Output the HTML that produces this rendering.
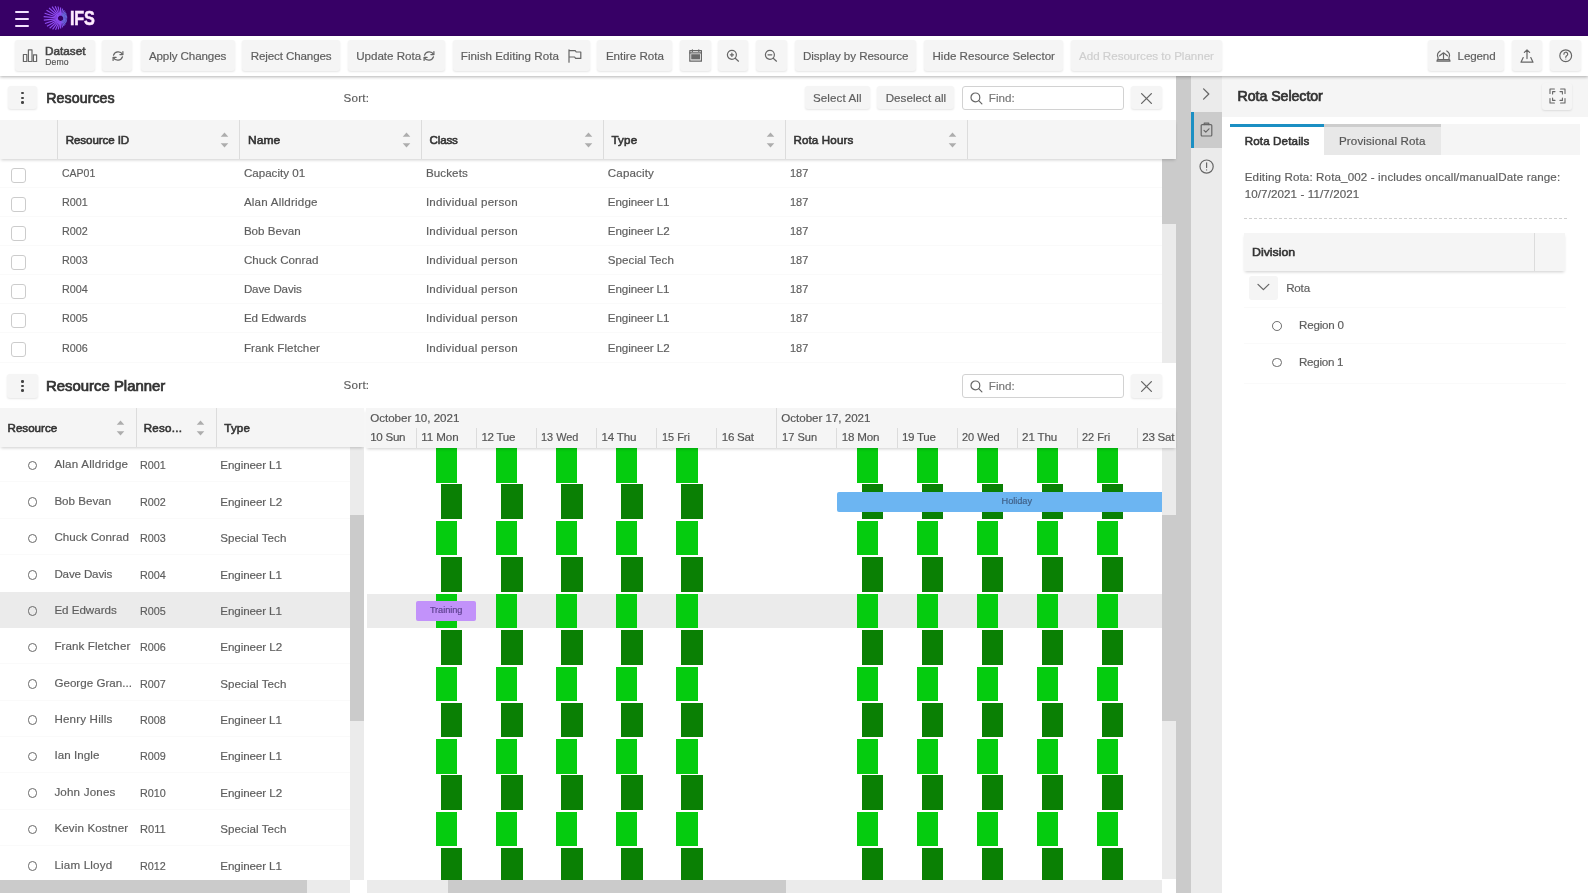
<!DOCTYPE html>
<html lang="en"><head><meta charset="utf-8"><title>IFS Resource Planner</title>
<style>
html,body{margin:0;padding:0;}
body{width:1588px;height:893px;overflow:hidden;background:#fff;position:relative;font-family:"Liberation Sans",sans-serif;}
#app{position:absolute;left:0;top:0;width:1588px;height:893px;overflow:hidden;will-change:transform;}
#app div,#app span.t,#app svg.i{position:absolute;}
span.t{white-space:nowrap;line-height:16px;height:16px;-webkit-text-stroke-width:.18px;}
span.b{-webkit-text-stroke-width:.05em;}
.btn{background:#f5f5f5;border-radius:3px;box-shadow:0 1px 2px rgba(0,0,0,.10);}
.hdr{background:#f5f5f5;box-shadow:0 2px 3px -1px rgba(0,0,0,.2);}
.sep{background:#fafafa;height:1px;}
svg.i{overflow:visible;fill:none;stroke:#666;stroke-width:1.2;stroke-linecap:round;stroke-linejoin:round;}
.lg{background:#05cc0f;}
.dg{background:#0a8004;}
</style></head><body><div id="app">

<div style="left:0.0px;top:0.0px;width:1588.0px;height:36.0px;background:#370066;"></div>
<div style="left:14.9px;top:11.3px;width:14.0px;height:2.0px;background:#f3e0ff;border-radius:1px;"></div>
<div style="left:14.9px;top:17.9px;width:14.0px;height:2.0px;background:#f3e0ff;border-radius:1px;"></div>
<div style="left:14.9px;top:24.5px;width:14.0px;height:2.0px;background:#f3e0ff;border-radius:1px;"></div>
<svg class="i" style="left:43.0px;top:5.0px;stroke-width:1.15;stroke-linecap:butt;" width="26" height="26" viewBox="0 0 26 26"><line x1="20.29" y1="13.57" x2="24.16" y2="13.96" stroke="#6a68dc"/><line x1="20.17" y1="14.12" x2="23.97" y2="15.34" stroke="#6a68dc"/><line x1="19.94" y1="14.64" x2="23.60" y2="16.72" stroke="#6a68dc"/><line x1="19.61" y1="15.10" x2="23.02" y2="18.14" stroke="#6a68dc"/><line x1="19.20" y1="15.48" x2="22.20" y2="19.57" stroke="#6a68dc"/><line x1="18.71" y1="15.76" x2="21.07" y2="21.00" stroke="#7a58e8"/><line x1="18.17" y1="15.94" x2="19.57" y2="22.37" stroke="#7a58e8"/><line x1="17.61" y1="16.00" x2="17.65" y2="23.57" stroke="#8f4cf2"/><line x1="17.05" y1="15.94" x2="15.29" y2="24.44" stroke="#8f4cf2"/><line x1="16.51" y1="15.77" x2="12.55" y2="24.80" stroke="#8f4cf2"/><line x1="16.02" y1="15.49" x2="9.57" y2="24.46" stroke="#8f4cf2"/><line x1="15.60" y1="15.12" x2="6.62" y2="23.28" stroke="#8f4cf2"/><line x1="15.27" y1="14.66" x2="3.97" y2="21.26" stroke="#8f4cf2"/><line x1="15.04" y1="14.15" x2="1.94" y2="18.47" stroke="#8f4cf2"/><line x1="14.92" y1="13.59" x2="0.80" y2="15.15" stroke="#8f4cf2"/><line x1="14.91" y1="13.03" x2="0.68" y2="11.60" stroke="#8f4cf2"/><line x1="15.03" y1="12.48" x2="1.62" y2="8.19" stroke="#8f4cf2"/><line x1="15.26" y1="11.96" x2="3.50" y2="5.25" stroke="#8f4cf2"/><line x1="15.59" y1="11.50" x2="6.09" y2="3.03" stroke="#8f4cf2"/><line x1="16.00" y1="11.12" x2="9.07" y2="1.68" stroke="#8f4cf2"/><line x1="16.49" y1="10.84" x2="12.15" y2="1.20" stroke="#8f4cf2"/><line x1="17.03" y1="10.66" x2="15.03" y2="1.50" stroke="#8f4cf2"/><line x1="17.59" y1="10.60" x2="17.55" y2="2.38" stroke="#8f4cf2"/><line x1="18.15" y1="10.66" x2="19.60" y2="3.65" stroke="#7a58e8"/><line x1="18.69" y1="10.83" x2="21.19" y2="5.13" stroke="#7a58e8"/><line x1="19.18" y1="11.11" x2="22.36" y2="6.68" stroke="#6a68dc"/><line x1="19.60" y1="11.48" x2="23.19" y2="8.22" stroke="#6a68dc"/><line x1="19.93" y1="11.94" x2="23.73" y2="9.72" stroke="#6a68dc"/><line x1="20.16" y1="12.45" x2="24.06" y2="11.17" stroke="#6a68dc"/><line x1="20.28" y1="13.01" x2="24.19" y2="12.58" stroke="#6a68dc"/></svg>
<span class="t" style="left:69.6px;top:7.4px;height:22px;line-height:22px;font-size:20.2px;font-weight:700;color:#ffeaff;-webkit-text-stroke:0.5px #ffeaff;transform:scaleX(.805);transform-origin:0 50%;letter-spacing:-0.2px;">IFS</span>
<div style="left:0.0px;top:36.0px;width:1588.0px;height:39.6px;background:#fff;box-shadow:0 1px 3px rgba(0,0,0,.30);z-index:5;"></div>
<div style="left:0;top:0;width:1588px;height:80px;z-index:6;">
<div class="btn" style="left:15.2px;top:40.4px;width:79.6px;height:30.2px;"></div>
<svg class="i" style="left:22.0px;top:48.0px;" width="16" height="15" viewBox="0 0 16 15"><rect x="1.4" y="6.5" width="3.4" height="7"/><rect x="6.4" y="1.8" width="3.6" height="11.7"/><rect x="11.4" y="6.8" width="3.2" height="6.7"/></svg>
<span class="t b" style="left:45.2px;top:43.3px;font-size:10.8px;color:#444;transform:scaleX(1.088);transform-origin:0 50%;">Dataset</span>
<span class="t" style="left:45.2px;top:53.6px;font-size:8.6px;color:#555;letter-spacing:0.12px;">Demo</span>
<div class="btn" style="left:102.3px;top:40.4px;width:30.0px;height:30.2px;"></div>
<svg class="i" style="left:111.5px;top:49.8px;" width="12" height="12" viewBox="0 0 12 12"><path d="M10.6 4.4A5 5 0 0 0 1.5 5.2M1.4 7.6A5 5 0 0 0 10.5 6.8"/><path d="M10.9 1.6v3h-3M1.1 10.4v-3h3"/></svg>
<div class="btn" style="left:140.8px;top:40.4px;width:94.0px;height:30.2px;"></div>
<span class="t" style="left:148.9px;top:47.9px;font-size:11.6px;color:#5e5e5e;letter-spacing:-0.10px;">Apply Changes</span>
<div class="btn" style="left:242.4px;top:40.4px;width:97.6px;height:30.2px;"></div>
<span class="t" style="left:250.8px;top:47.9px;font-size:11.6px;color:#5e5e5e;letter-spacing:-0.13px;">Reject Changes</span>
<div class="btn" style="left:347.5px;top:40.4px;width:97.5px;height:30.2px;"></div>
<span class="t" style="left:356.2px;top:47.9px;font-size:11.6px;color:#5e5e5e;letter-spacing:-0.01px;">Update Rota</span>
<svg class="i" style="left:423.3px;top:49.6px;" width="12" height="12" viewBox="0 0 12 12"><path d="M10.6 4.4A5 5 0 0 0 1.5 5.2M1.4 7.6A5 5 0 0 0 10.5 6.8"/><path d="M10.9 1.6v3h-3M1.1 10.4v-3h3"/></svg>
<div class="btn" style="left:452.8px;top:40.4px;width:136.8px;height:30.2px;"></div>
<span class="t" style="left:460.8px;top:47.9px;font-size:11.6px;color:#5e5e5e;letter-spacing:0.05px;">Finish Editing Rota</span>
<svg class="i" style="left:568.0px;top:49.4px;" width="14" height="14" viewBox="0 0 14 14"><path d="M1 0.8v12.4M1 1.6h6.2l1 1.4h4.6v6.4H7.6l-1-1.4H1"/></svg>
<div class="btn" style="left:597.2px;top:40.4px;width:74.8px;height:30.2px;"></div>
<span class="t" style="left:605.9px;top:47.9px;font-size:11.6px;color:#5e5e5e;">Entire Rota</span>
<div class="btn" style="left:680.2px;top:40.4px;width:30.4px;height:30.2px;"></div>
<svg class="i" style="left:688.6px;top:49.4px;" width="13" height="13" viewBox="0 0 13 13"><rect x="0.8" y="1.6" width="11.6" height="10.6"/><path d="M0.8 3.9h11.6M3.4 0.8v1.6M9.8 0.8v1.6"/><rect x="2.2" y="5.2" width="8.8" height="5.2" fill="#6a6a6a" stroke="none"/></svg>
<div class="btn" style="left:718.3px;top:40.4px;width:30.1px;height:30.2px;"></div>
<svg class="i" style="left:726.0px;top:48.7px;" width="14" height="14" viewBox="0 0 14 14"><circle cx="5.9" cy="5.8" r="4.5"/><path d="M9.2 9.2l3.3 3M4.3 5.8h3.2M5.9 4.2v3.2"/></svg>
<div class="btn" style="left:756.4px;top:40.4px;width:31.1px;height:30.2px;"></div>
<svg class="i" style="left:764.2px;top:48.7px;" width="14" height="14" viewBox="0 0 14 14"><circle cx="5.9" cy="5.8" r="4.5"/><path d="M9.2 9.2l3.3 3M4 5.8h3.8"/></svg>
<div class="btn" style="left:794.5px;top:40.4px;width:121.5px;height:30.2px;"></div>
<span class="t" style="left:803.0px;top:47.9px;font-size:11.6px;color:#5e5e5e;letter-spacing:-0.05px;">Display by Resource</span>
<div class="btn" style="left:924.2px;top:40.4px;width:139.2px;height:30.2px;"></div>
<span class="t" style="left:932.5px;top:47.9px;font-size:11.6px;color:#5e5e5e;">Hide Resource Selector</span>
<div class="btn" style="left:1070.6px;top:40.4px;width:151.9px;height:30.2px;"></div>
<span class="t" style="left:1079.1px;top:47.9px;font-size:11.6px;color:#cfcfcf;letter-spacing:-0.02px;">Add Resources to Planner</span>
<div class="btn" style="left:1427.6px;top:40.4px;width:76.8px;height:30.2px;"></div>
<span class="t" style="left:1457.6px;top:47.9px;font-size:11.6px;color:#5e5e5e;letter-spacing:-0.14px;">Legend</span>
<svg class="i" style="left:1435.6px;top:49.6px;" width="15" height="12" viewBox="0 0 15 12"><path d="M4.2 1Q0.2 3.4 2 7.6V9.6M10.8 1Q14.8 3.4 13 7.6V9.6M3.6 5.8L7.5 2.8L11.4 5.8M7.5 3.2V9.4M1.4 9.6H13.6L14 11.2H1Z"/></svg>
<div class="btn" style="left:1512.4px;top:40.4px;width:30.0px;height:30.2px;"></div>
<svg class="i" style="left:1520.4px;top:49.0px;" width="14" height="14" viewBox="0 0 14 14"><path d="M7 9.6V1M4.4 3.4L7 0.8l2.6 2.6M3.2 8.6L1 13.2h12l-2.2-4.6"/></svg>
<div class="btn" style="left:1550.2px;top:40.4px;width:30.4px;height:30.2px;"></div>
<svg class="i" style="left:1558.6px;top:49.2px;" width="14" height="14" viewBox="0 0 14 14"><circle cx="6.7" cy="6.7" r="5.9"/><path d="M4.9 5.2a1.9 1.9 0 1 1 2.8 1.6c-.7.4-.9.8-.9 1.5"/><circle cx="6.8" cy="10" r=".5" fill="#666" stroke="none"/></svg>
</div>
<div class="btn" style="left:7.5px;top:86.2px;width:29.8px;height:23.1px;"></div>
<div style="left:21.1px;top:91.9px;width:2.6px;height:2.6px;background:#444;border-radius:50%;"></div>
<div style="left:21.1px;top:96.5px;width:2.6px;height:2.6px;background:#444;border-radius:50%;"></div>
<div style="left:21.1px;top:101.0px;width:2.6px;height:2.6px;background:#444;border-radius:50%;"></div>
<span class="t b" style="left:46.3px;top:90.2px;font-size:14.2px;color:#333;letter-spacing:0.07px;">Resources</span>
<span class="t" style="left:343.5px;top:89.6px;font-size:11.6px;color:#5e5e5e;letter-spacing:0.25px;">Sort:</span>
<div class="btn" style="left:805.4px;top:86.3px;width:64.3px;height:23.1px;"></div>
<span class="t" style="left:813.0px;top:90.0px;font-size:11.6px;color:#5e5e5e;letter-spacing:0.09px;">Select All</span>
<div class="btn" style="left:877.0px;top:86.3px;width:77.0px;height:23.1px;"></div>
<span class="t" style="left:885.7px;top:90.0px;font-size:11.6px;color:#5e5e5e;letter-spacing:0.05px;">Deselect all</span>
<div style="left:962.3px;top:86.3px;width:161.6px;height:24.0px;box-sizing:border-box;border:1px solid #d2d2d2;border-radius:3px;background:#fff;"></div>
<svg class="i" style="left:969.6px;top:91.9px;" width="13" height="13" viewBox="0 0 13 13"><circle cx="5.4" cy="5.4" r="4.4"/><path d="M8.7 8.7l3.2 3.2"/></svg>
<span class="t" style="left:988.8px;top:90.3px;font-size:11.6px;color:#777;letter-spacing:0.03px;">Find:</span>
<div class="btn" style="left:1131.4px;top:86.3px;width:30.3px;height:23.2px;"></div>
<svg class="i" style="left:1141.0px;top:92.7px;stroke-width:1.3;" width="11" height="11" viewBox="0 0 11 11"><path d="M0.6 0.6l9.8 9.8M10.4 0.6L0.6 10.4"/></svg>
<div class="hdr" style="left:0.0px;top:120.4px;width:1176.0px;height:38.2px;z-index:2;"></div>
<div style="left:0;top:0;width:1176px;height:170px;z-index:3;">
<div style="left:56.9px;top:120.4px;width:1.0px;height:38.2px;background:#dcdcdc;"></div>
<div style="left:238.8px;top:120.4px;width:1.0px;height:38.2px;background:#dcdcdc;"></div>
<div style="left:420.8px;top:120.4px;width:1.0px;height:38.2px;background:#dcdcdc;"></div>
<div style="left:602.7px;top:120.4px;width:1.0px;height:38.2px;background:#dcdcdc;"></div>
<div style="left:784.6px;top:120.4px;width:1.0px;height:38.2px;background:#dcdcdc;"></div>
<div style="left:966.6px;top:120.4px;width:1.0px;height:38.2px;background:#dcdcdc;"></div>
<span class="t b" style="left:65.7px;top:131.7px;font-size:11.6px;color:#333;letter-spacing:-0.09px;">Resource ID</span>
<svg class="i" style="left:220.0px;top:130.5px;" width="9" height="18" viewBox="0 0 9 18"><path d="M4.5 1.5L8.3 5.7H0.7Z M4.5 16.5L8.3 12.3H0.7Z" fill="#adadad" stroke="none"/></svg>
<span class="t b" style="left:247.6px;top:131.7px;font-size:11.6px;color:#333;transform:scaleX(1.038);transform-origin:0 50%;">Name</span>
<svg class="i" style="left:402.0px;top:130.5px;" width="9" height="18" viewBox="0 0 9 18"><path d="M4.5 1.5L8.3 5.7H0.7Z M4.5 16.5L8.3 12.3H0.7Z" fill="#adadad" stroke="none"/></svg>
<span class="t b" style="left:429.6px;top:131.7px;font-size:11.6px;color:#333;letter-spacing:-0.17px;">Class</span>
<svg class="i" style="left:583.9px;top:130.5px;" width="9" height="18" viewBox="0 0 9 18"><path d="M4.5 1.5L8.3 5.7H0.7Z M4.5 16.5L8.3 12.3H0.7Z" fill="#adadad" stroke="none"/></svg>
<span class="t b" style="left:611.5px;top:131.7px;font-size:11.6px;color:#333;letter-spacing:0.15px;">Type</span>
<svg class="i" style="left:765.8px;top:130.5px;" width="9" height="18" viewBox="0 0 9 18"><path d="M4.5 1.5L8.3 5.7H0.7Z M4.5 16.5L8.3 12.3H0.7Z" fill="#adadad" stroke="none"/></svg>
<span class="t b" style="left:793.4px;top:131.7px;font-size:11.6px;color:#333;letter-spacing:0.14px;">Rota Hours</span>
<svg class="i" style="left:947.8px;top:130.5px;" width="9" height="18" viewBox="0 0 9 18"><path d="M4.5 1.5L8.3 5.7H0.7Z M4.5 16.5L8.3 12.3H0.7Z" fill="#adadad" stroke="none"/></svg>
</div>
<div style="left:10.6px;top:167.5px;width:15.4px;height:15.2px;box-sizing:border-box;border:1px solid #ccc;border-radius:3px;background:#fff;"></div>
<span class="t" style="left:62.0px;top:164.9px;font-size:11.6px;color:#5e5e5e;transform:scaleX(0.904);transform-origin:0 50%;">CAP01</span>
<span class="t" style="left:243.9px;top:164.9px;font-size:11.6px;color:#5e5e5e;">Capacity 01</span>
<span class="t" style="left:425.9px;top:164.9px;font-size:11.6px;color:#5e5e5e;letter-spacing:0.11px;">Buckets</span>
<span class="t" style="left:607.8px;top:164.9px;font-size:11.6px;color:#5e5e5e;letter-spacing:0.14px;">Capacity</span>
<span class="t" style="left:789.7px;top:164.9px;font-size:11.6px;color:#5e5e5e;transform:scaleX(0.946);transform-origin:0 50%;">187</span>
<div class="sep" style="left:0.0px;top:186.9px;width:1162.0px;height:1.0px;"></div>
<div style="left:10.6px;top:196.6px;width:15.4px;height:15.2px;box-sizing:border-box;border:1px solid #ccc;border-radius:3px;background:#fff;"></div>
<span class="t" style="left:62.0px;top:194.0px;font-size:11.6px;color:#5e5e5e;transform:scaleX(0.931);transform-origin:0 50%;">R001</span>
<span class="t" style="left:243.9px;top:194.0px;font-size:11.6px;color:#5e5e5e;letter-spacing:0.21px;">Alan Alldridge</span>
<span class="t" style="left:425.9px;top:194.0px;font-size:11.6px;color:#5e5e5e;letter-spacing:0.26px;">Individual person</span>
<span class="t" style="left:607.8px;top:194.0px;font-size:11.6px;color:#5e5e5e;letter-spacing:-0.09px;">Engineer L1</span>
<span class="t" style="left:789.7px;top:194.0px;font-size:11.6px;color:#5e5e5e;transform:scaleX(0.946);transform-origin:0 50%;">187</span>
<div class="sep" style="left:0.0px;top:216.0px;width:1162.0px;height:1.0px;"></div>
<div style="left:10.6px;top:225.7px;width:15.4px;height:15.2px;box-sizing:border-box;border:1px solid #ccc;border-radius:3px;background:#fff;"></div>
<span class="t" style="left:62.0px;top:223.1px;font-size:11.6px;color:#5e5e5e;transform:scaleX(0.931);transform-origin:0 50%;">R002</span>
<span class="t" style="left:243.9px;top:223.1px;font-size:11.6px;color:#5e5e5e;">Bob Bevan</span>
<span class="t" style="left:425.9px;top:223.1px;font-size:11.6px;color:#5e5e5e;letter-spacing:0.26px;">Individual person</span>
<span class="t" style="left:607.8px;top:223.1px;font-size:11.6px;color:#5e5e5e;letter-spacing:-0.07px;">Engineer L2</span>
<span class="t" style="left:789.7px;top:223.1px;font-size:11.6px;color:#5e5e5e;transform:scaleX(0.946);transform-origin:0 50%;">187</span>
<div class="sep" style="left:0.0px;top:245.1px;width:1162.0px;height:1.0px;"></div>
<div style="left:10.6px;top:254.8px;width:15.4px;height:15.2px;box-sizing:border-box;border:1px solid #ccc;border-radius:3px;background:#fff;"></div>
<span class="t" style="left:62.0px;top:252.2px;font-size:11.6px;color:#5e5e5e;transform:scaleX(0.931);transform-origin:0 50%;">R003</span>
<span class="t" style="left:243.9px;top:252.2px;font-size:11.6px;color:#5e5e5e;letter-spacing:0.03px;">Chuck Conrad</span>
<span class="t" style="left:425.9px;top:252.2px;font-size:11.6px;color:#5e5e5e;letter-spacing:0.26px;">Individual person</span>
<span class="t" style="left:607.8px;top:252.2px;font-size:11.6px;color:#5e5e5e;letter-spacing:0.05px;">Special Tech</span>
<span class="t" style="left:789.7px;top:252.2px;font-size:11.6px;color:#5e5e5e;transform:scaleX(0.946);transform-origin:0 50%;">187</span>
<div class="sep" style="left:0.0px;top:274.2px;width:1162.0px;height:1.0px;"></div>
<div style="left:10.6px;top:283.9px;width:15.4px;height:15.2px;box-sizing:border-box;border:1px solid #ccc;border-radius:3px;background:#fff;"></div>
<span class="t" style="left:62.0px;top:281.3px;font-size:11.6px;color:#5e5e5e;transform:scaleX(0.931);transform-origin:0 50%;">R004</span>
<span class="t" style="left:243.9px;top:281.3px;font-size:11.6px;color:#5e5e5e;letter-spacing:-0.16px;">Dave Davis</span>
<span class="t" style="left:425.9px;top:281.3px;font-size:11.6px;color:#5e5e5e;letter-spacing:0.26px;">Individual person</span>
<span class="t" style="left:607.8px;top:281.3px;font-size:11.6px;color:#5e5e5e;letter-spacing:-0.09px;">Engineer L1</span>
<span class="t" style="left:789.7px;top:281.3px;font-size:11.6px;color:#5e5e5e;transform:scaleX(0.946);transform-origin:0 50%;">187</span>
<div class="sep" style="left:0.0px;top:303.3px;width:1162.0px;height:1.0px;"></div>
<div style="left:10.6px;top:313.0px;width:15.4px;height:15.2px;box-sizing:border-box;border:1px solid #ccc;border-radius:3px;background:#fff;"></div>
<span class="t" style="left:62.0px;top:310.4px;font-size:11.6px;color:#5e5e5e;transform:scaleX(0.931);transform-origin:0 50%;">R005</span>
<span class="t" style="left:243.9px;top:310.4px;font-size:11.6px;color:#5e5e5e;letter-spacing:-0.02px;">Ed Edwards</span>
<span class="t" style="left:425.9px;top:310.4px;font-size:11.6px;color:#5e5e5e;letter-spacing:0.26px;">Individual person</span>
<span class="t" style="left:607.8px;top:310.4px;font-size:11.6px;color:#5e5e5e;letter-spacing:-0.09px;">Engineer L1</span>
<span class="t" style="left:789.7px;top:310.4px;font-size:11.6px;color:#5e5e5e;transform:scaleX(0.946);transform-origin:0 50%;">187</span>
<div class="sep" style="left:0.0px;top:332.4px;width:1162.0px;height:1.0px;"></div>
<div style="left:10.6px;top:342.1px;width:15.4px;height:15.2px;box-sizing:border-box;border:1px solid #ccc;border-radius:3px;background:#fff;"></div>
<span class="t" style="left:62.0px;top:339.5px;font-size:11.6px;color:#5e5e5e;transform:scaleX(0.931);transform-origin:0 50%;">R006</span>
<span class="t" style="left:243.9px;top:339.5px;font-size:11.6px;color:#5e5e5e;letter-spacing:0.09px;">Frank Fletcher</span>
<span class="t" style="left:425.9px;top:339.5px;font-size:11.6px;color:#5e5e5e;letter-spacing:0.26px;">Individual person</span>
<span class="t" style="left:607.8px;top:339.5px;font-size:11.6px;color:#5e5e5e;letter-spacing:-0.07px;">Engineer L2</span>
<span class="t" style="left:789.7px;top:339.5px;font-size:11.6px;color:#5e5e5e;transform:scaleX(0.946);transform-origin:0 50%;">187</span>
<div class="sep" style="left:0.0px;top:361.5px;width:1162.0px;height:1.0px;"></div>
<div style="left:1162.0px;top:158.6px;width:14.0px;height:204.0px;background:#ebebeb;"></div>
<div style="left:1162.0px;top:159.0px;width:14.0px;height:65.0px;background:#cbcbcb;"></div>
<div class="btn" style="left:7.4px;top:374.4px;width:30.2px;height:23.2px;"></div>
<div style="left:21.2px;top:380.1px;width:2.6px;height:2.6px;background:#444;border-radius:50%;"></div>
<div style="left:21.2px;top:384.7px;width:2.6px;height:2.6px;background:#444;border-radius:50%;"></div>
<div style="left:21.2px;top:389.3px;width:2.6px;height:2.6px;background:#444;border-radius:50%;"></div>
<span class="t b" style="left:46.0px;top:378.3px;font-size:14.2px;color:#333;transform:scaleX(1.050);transform-origin:0 50%;">Resource Planner</span>
<span class="t" style="left:343.6px;top:376.9px;font-size:11.6px;color:#5e5e5e;letter-spacing:0.25px;">Sort:</span>
<div style="left:962.3px;top:373.9px;width:161.6px;height:24.6px;box-sizing:border-box;border:1px solid #d2d2d2;border-radius:3px;background:#fff;"></div>
<svg class="i" style="left:969.6px;top:379.8px;" width="13" height="13" viewBox="0 0 13 13"><circle cx="5.4" cy="5.4" r="4.4"/><path d="M8.7 8.7l3.2 3.2"/></svg>
<span class="t" style="left:988.8px;top:378.2px;font-size:11.6px;color:#777;letter-spacing:0.03px;">Find:</span>
<div class="btn" style="left:1131.4px;top:373.9px;width:30.3px;height:23.8px;"></div>
<svg class="i" style="left:1141.0px;top:380.6px;stroke-width:1.3;" width="11" height="11" viewBox="0 0 11 11"><path d="M0.6 0.6l9.8 9.8M10.4 0.6L0.6 10.4"/></svg>
<div style="left:0.0px;top:591.7px;width:349.5px;height:36.0px;background:#ebebeb;"></div>
<div style="left:366.6px;top:593.9px;width:795.4px;height:34.5px;background:#ebebeb;"></div>
<div style="left:27.5px;top:460.7px;width:9.8px;height:9.8px;box-sizing:border-box;border:1.75px solid #686868;border-radius:50%;"></div>
<span class="t" style="left:54.4px;top:456.4px;font-size:11.6px;color:#5e5e5e;letter-spacing:0.21px;">Alan Alldridge</span>
<span class="t" style="left:140.4px;top:457.4px;font-size:11.6px;color:#5e5e5e;transform:scaleX(0.931);transform-origin:0 50%;">R001</span>
<span class="t" style="left:220.3px;top:457.4px;font-size:11.6px;color:#5e5e5e;letter-spacing:-0.09px;">Engineer L1</span>
<div style="left:27.5px;top:497.1px;width:9.8px;height:9.8px;box-sizing:border-box;border:1.75px solid #686868;border-radius:50%;"></div>
<span class="t" style="left:54.4px;top:492.8px;font-size:11.6px;color:#5e5e5e;">Bob Bevan</span>
<span class="t" style="left:140.4px;top:493.8px;font-size:11.6px;color:#5e5e5e;transform:scaleX(0.931);transform-origin:0 50%;">R002</span>
<span class="t" style="left:220.3px;top:493.8px;font-size:11.6px;color:#5e5e5e;letter-spacing:-0.07px;">Engineer L2</span>
<div class="sep" style="left:0.0px;top:481.3px;width:349.5px;height:1.0px;"></div>
<div style="left:27.5px;top:533.5px;width:9.8px;height:9.8px;box-sizing:border-box;border:1.75px solid #686868;border-radius:50%;"></div>
<span class="t" style="left:54.4px;top:529.2px;font-size:11.6px;color:#5e5e5e;letter-spacing:0.03px;">Chuck Conrad</span>
<span class="t" style="left:140.4px;top:530.2px;font-size:11.6px;color:#5e5e5e;transform:scaleX(0.931);transform-origin:0 50%;">R003</span>
<span class="t" style="left:220.3px;top:530.2px;font-size:11.6px;color:#5e5e5e;letter-spacing:0.05px;">Special Tech</span>
<div class="sep" style="left:0.0px;top:517.7px;width:349.5px;height:1.0px;"></div>
<div style="left:27.5px;top:569.8px;width:9.8px;height:9.8px;box-sizing:border-box;border:1.75px solid #686868;border-radius:50%;"></div>
<span class="t" style="left:54.4px;top:565.5px;font-size:11.6px;color:#5e5e5e;letter-spacing:-0.16px;">Dave Davis</span>
<span class="t" style="left:140.4px;top:566.5px;font-size:11.6px;color:#5e5e5e;transform:scaleX(0.931);transform-origin:0 50%;">R004</span>
<span class="t" style="left:220.3px;top:566.5px;font-size:11.6px;color:#5e5e5e;letter-spacing:-0.09px;">Engineer L1</span>
<div class="sep" style="left:0.0px;top:554.0px;width:349.5px;height:1.0px;"></div>
<div style="left:27.5px;top:606.2px;width:9.8px;height:9.8px;box-sizing:border-box;border:1.75px solid #686868;border-radius:50%;"></div>
<span class="t" style="left:54.4px;top:601.9px;font-size:11.6px;color:#5e5e5e;letter-spacing:-0.02px;">Ed Edwards</span>
<span class="t" style="left:140.4px;top:602.9px;font-size:11.6px;color:#5e5e5e;transform:scaleX(0.931);transform-origin:0 50%;">R005</span>
<span class="t" style="left:220.3px;top:602.9px;font-size:11.6px;color:#5e5e5e;letter-spacing:-0.09px;">Engineer L1</span>
<div style="left:27.5px;top:642.6px;width:9.8px;height:9.8px;box-sizing:border-box;border:1.75px solid #686868;border-radius:50%;"></div>
<span class="t" style="left:54.4px;top:638.3px;font-size:11.6px;color:#5e5e5e;letter-spacing:0.09px;">Frank Fletcher</span>
<span class="t" style="left:140.4px;top:639.3px;font-size:11.6px;color:#5e5e5e;transform:scaleX(0.931);transform-origin:0 50%;">R006</span>
<span class="t" style="left:220.3px;top:639.3px;font-size:11.6px;color:#5e5e5e;letter-spacing:-0.07px;">Engineer L2</span>
<div style="left:27.5px;top:679.0px;width:9.8px;height:9.8px;box-sizing:border-box;border:1.75px solid #686868;border-radius:50%;"></div>
<span class="t" style="left:54.4px;top:674.7px;font-size:11.6px;color:#5e5e5e;letter-spacing:0.02px;">George Gran...</span>
<span class="t" style="left:140.4px;top:675.7px;font-size:11.6px;color:#5e5e5e;transform:scaleX(0.931);transform-origin:0 50%;">R007</span>
<span class="t" style="left:220.3px;top:675.7px;font-size:11.6px;color:#5e5e5e;letter-spacing:0.05px;">Special Tech</span>
<div class="sep" style="left:0.0px;top:663.1px;width:349.5px;height:1.0px;"></div>
<div style="left:27.5px;top:715.4px;width:9.8px;height:9.8px;box-sizing:border-box;border:1.75px solid #686868;border-radius:50%;"></div>
<span class="t" style="left:54.4px;top:711.1px;font-size:11.6px;color:#5e5e5e;letter-spacing:0.18px;">Henry Hills</span>
<span class="t" style="left:140.4px;top:712.1px;font-size:11.6px;color:#5e5e5e;transform:scaleX(0.931);transform-origin:0 50%;">R008</span>
<span class="t" style="left:220.3px;top:712.1px;font-size:11.6px;color:#5e5e5e;letter-spacing:-0.09px;">Engineer L1</span>
<div class="sep" style="left:0.0px;top:699.5px;width:349.5px;height:1.0px;"></div>
<div style="left:27.5px;top:751.7px;width:9.8px;height:9.8px;box-sizing:border-box;border:1.75px solid #686868;border-radius:50%;"></div>
<span class="t" style="left:54.4px;top:747.4px;font-size:11.6px;color:#5e5e5e;letter-spacing:0.06px;">Ian Ingle</span>
<span class="t" style="left:140.4px;top:748.4px;font-size:11.6px;color:#5e5e5e;transform:scaleX(0.931);transform-origin:0 50%;">R009</span>
<span class="t" style="left:220.3px;top:748.4px;font-size:11.6px;color:#5e5e5e;letter-spacing:-0.09px;">Engineer L1</span>
<div class="sep" style="left:0.0px;top:735.8px;width:349.5px;height:1.0px;"></div>
<div style="left:27.5px;top:788.1px;width:9.8px;height:9.8px;box-sizing:border-box;border:1.75px solid #686868;border-radius:50%;"></div>
<span class="t" style="left:54.4px;top:783.8px;font-size:11.6px;color:#5e5e5e;letter-spacing:0.18px;">John Jones</span>
<span class="t" style="left:140.4px;top:784.8px;font-size:11.6px;color:#5e5e5e;transform:scaleX(0.931);transform-origin:0 50%;">R010</span>
<span class="t" style="left:220.3px;top:784.8px;font-size:11.6px;color:#5e5e5e;letter-spacing:-0.07px;">Engineer L2</span>
<div class="sep" style="left:0.0px;top:772.2px;width:349.5px;height:1.0px;"></div>
<div style="left:27.5px;top:824.5px;width:9.8px;height:9.8px;box-sizing:border-box;border:1.75px solid #686868;border-radius:50%;"></div>
<span class="t" style="left:54.4px;top:820.2px;font-size:11.6px;color:#5e5e5e;letter-spacing:0.13px;">Kevin Kostner</span>
<span class="t" style="left:140.4px;top:821.2px;font-size:11.6px;color:#5e5e5e;transform:scaleX(0.961);transform-origin:0 50%;">R011</span>
<span class="t" style="left:220.3px;top:821.2px;font-size:11.6px;color:#5e5e5e;letter-spacing:0.05px;">Special Tech</span>
<div class="sep" style="left:0.0px;top:808.5px;width:349.5px;height:1.0px;"></div>
<div style="left:27.5px;top:860.9px;width:9.8px;height:9.8px;box-sizing:border-box;border:1.75px solid #686868;border-radius:50%;"></div>
<span class="t" style="left:54.4px;top:856.6px;font-size:11.6px;color:#5e5e5e;letter-spacing:0.19px;">Liam Lloyd</span>
<span class="t" style="left:140.4px;top:857.6px;font-size:11.6px;color:#5e5e5e;transform:scaleX(0.931);transform-origin:0 50%;">R012</span>
<span class="t" style="left:220.3px;top:857.6px;font-size:11.6px;color:#5e5e5e;letter-spacing:-0.09px;">Engineer L1</span>
<div class="sep" style="left:0.0px;top:844.9px;width:349.5px;height:1.0px;"></div>
<div class="lg" style="left:436.0px;top:448.4px;width:21.3px;height:34.2px;"></div>
<div class="lg" style="left:496.1px;top:448.4px;width:21.3px;height:34.2px;"></div>
<div class="lg" style="left:556.2px;top:448.4px;width:21.3px;height:34.2px;"></div>
<div class="lg" style="left:616.2px;top:448.4px;width:21.3px;height:34.2px;"></div>
<div class="lg" style="left:676.3px;top:448.4px;width:21.3px;height:34.2px;"></div>
<div class="lg" style="left:856.6px;top:448.4px;width:21.3px;height:34.2px;"></div>
<div class="lg" style="left:916.6px;top:448.4px;width:21.3px;height:34.2px;"></div>
<div class="lg" style="left:976.7px;top:448.4px;width:21.3px;height:34.2px;"></div>
<div class="lg" style="left:1036.8px;top:448.4px;width:21.3px;height:34.2px;"></div>
<div class="lg" style="left:1096.9px;top:448.4px;width:21.3px;height:34.2px;"></div>
<div class="dg" style="left:440.9px;top:484.4px;width:21.5px;height:34.7px;"></div>
<div class="dg" style="left:501.0px;top:484.4px;width:21.5px;height:34.7px;"></div>
<div class="dg" style="left:561.1px;top:484.4px;width:21.5px;height:34.7px;"></div>
<div class="dg" style="left:621.1px;top:484.4px;width:21.5px;height:34.7px;"></div>
<div class="dg" style="left:681.2px;top:484.4px;width:21.5px;height:34.7px;"></div>
<div class="dg" style="left:861.5px;top:484.4px;width:21.5px;height:34.7px;"></div>
<div class="dg" style="left:921.5px;top:484.4px;width:21.5px;height:34.7px;"></div>
<div class="dg" style="left:981.6px;top:484.4px;width:21.5px;height:34.7px;"></div>
<div class="dg" style="left:1041.7px;top:484.4px;width:21.5px;height:34.7px;"></div>
<div class="dg" style="left:1101.8px;top:484.4px;width:21.5px;height:34.7px;"></div>
<div class="lg" style="left:436.0px;top:521.2px;width:21.3px;height:34.2px;"></div>
<div class="lg" style="left:496.1px;top:521.2px;width:21.3px;height:34.2px;"></div>
<div class="lg" style="left:556.2px;top:521.2px;width:21.3px;height:34.2px;"></div>
<div class="lg" style="left:616.2px;top:521.2px;width:21.3px;height:34.2px;"></div>
<div class="lg" style="left:676.3px;top:521.2px;width:21.3px;height:34.2px;"></div>
<div class="lg" style="left:856.6px;top:521.2px;width:21.3px;height:34.2px;"></div>
<div class="lg" style="left:916.6px;top:521.2px;width:21.3px;height:34.2px;"></div>
<div class="lg" style="left:976.7px;top:521.2px;width:21.3px;height:34.2px;"></div>
<div class="lg" style="left:1036.8px;top:521.2px;width:21.3px;height:34.2px;"></div>
<div class="lg" style="left:1096.9px;top:521.2px;width:21.3px;height:34.2px;"></div>
<div class="dg" style="left:440.9px;top:557.1px;width:21.5px;height:34.7px;"></div>
<div class="dg" style="left:501.0px;top:557.1px;width:21.5px;height:34.7px;"></div>
<div class="dg" style="left:561.1px;top:557.1px;width:21.5px;height:34.7px;"></div>
<div class="dg" style="left:621.1px;top:557.1px;width:21.5px;height:34.7px;"></div>
<div class="dg" style="left:681.2px;top:557.1px;width:21.5px;height:34.7px;"></div>
<div class="dg" style="left:861.5px;top:557.1px;width:21.5px;height:34.7px;"></div>
<div class="dg" style="left:921.5px;top:557.1px;width:21.5px;height:34.7px;"></div>
<div class="dg" style="left:981.6px;top:557.1px;width:21.5px;height:34.7px;"></div>
<div class="dg" style="left:1041.7px;top:557.1px;width:21.5px;height:34.7px;"></div>
<div class="dg" style="left:1101.8px;top:557.1px;width:21.5px;height:34.7px;"></div>
<div class="lg" style="left:436.0px;top:593.9px;width:21.3px;height:34.2px;"></div>
<div class="lg" style="left:496.1px;top:593.9px;width:21.3px;height:34.2px;"></div>
<div class="lg" style="left:556.2px;top:593.9px;width:21.3px;height:34.2px;"></div>
<div class="lg" style="left:616.2px;top:593.9px;width:21.3px;height:34.2px;"></div>
<div class="lg" style="left:676.3px;top:593.9px;width:21.3px;height:34.2px;"></div>
<div class="lg" style="left:856.6px;top:593.9px;width:21.3px;height:34.2px;"></div>
<div class="lg" style="left:916.6px;top:593.9px;width:21.3px;height:34.2px;"></div>
<div class="lg" style="left:976.7px;top:593.9px;width:21.3px;height:34.2px;"></div>
<div class="lg" style="left:1036.8px;top:593.9px;width:21.3px;height:34.2px;"></div>
<div class="lg" style="left:1096.9px;top:593.9px;width:21.3px;height:34.2px;"></div>
<div class="dg" style="left:440.9px;top:629.9px;width:21.5px;height:34.7px;"></div>
<div class="dg" style="left:501.0px;top:629.9px;width:21.5px;height:34.7px;"></div>
<div class="dg" style="left:561.1px;top:629.9px;width:21.5px;height:34.7px;"></div>
<div class="dg" style="left:621.1px;top:629.9px;width:21.5px;height:34.7px;"></div>
<div class="dg" style="left:681.2px;top:629.9px;width:21.5px;height:34.7px;"></div>
<div class="dg" style="left:861.5px;top:629.9px;width:21.5px;height:34.7px;"></div>
<div class="dg" style="left:921.5px;top:629.9px;width:21.5px;height:34.7px;"></div>
<div class="dg" style="left:981.6px;top:629.9px;width:21.5px;height:34.7px;"></div>
<div class="dg" style="left:1041.7px;top:629.9px;width:21.5px;height:34.7px;"></div>
<div class="dg" style="left:1101.8px;top:629.9px;width:21.5px;height:34.7px;"></div>
<div class="lg" style="left:436.0px;top:666.7px;width:21.3px;height:34.2px;"></div>
<div class="lg" style="left:496.1px;top:666.7px;width:21.3px;height:34.2px;"></div>
<div class="lg" style="left:556.2px;top:666.7px;width:21.3px;height:34.2px;"></div>
<div class="lg" style="left:616.2px;top:666.7px;width:21.3px;height:34.2px;"></div>
<div class="lg" style="left:676.3px;top:666.7px;width:21.3px;height:34.2px;"></div>
<div class="lg" style="left:856.6px;top:666.7px;width:21.3px;height:34.2px;"></div>
<div class="lg" style="left:916.6px;top:666.7px;width:21.3px;height:34.2px;"></div>
<div class="lg" style="left:976.7px;top:666.7px;width:21.3px;height:34.2px;"></div>
<div class="lg" style="left:1036.8px;top:666.7px;width:21.3px;height:34.2px;"></div>
<div class="lg" style="left:1096.9px;top:666.7px;width:21.3px;height:34.2px;"></div>
<div class="dg" style="left:440.9px;top:702.7px;width:21.5px;height:34.7px;"></div>
<div class="dg" style="left:501.0px;top:702.7px;width:21.5px;height:34.7px;"></div>
<div class="dg" style="left:561.1px;top:702.7px;width:21.5px;height:34.7px;"></div>
<div class="dg" style="left:621.1px;top:702.7px;width:21.5px;height:34.7px;"></div>
<div class="dg" style="left:681.2px;top:702.7px;width:21.5px;height:34.7px;"></div>
<div class="dg" style="left:861.5px;top:702.7px;width:21.5px;height:34.7px;"></div>
<div class="dg" style="left:921.5px;top:702.7px;width:21.5px;height:34.7px;"></div>
<div class="dg" style="left:981.6px;top:702.7px;width:21.5px;height:34.7px;"></div>
<div class="dg" style="left:1041.7px;top:702.7px;width:21.5px;height:34.7px;"></div>
<div class="dg" style="left:1101.8px;top:702.7px;width:21.5px;height:34.7px;"></div>
<div class="lg" style="left:436.0px;top:739.4px;width:21.3px;height:34.2px;"></div>
<div class="lg" style="left:496.1px;top:739.4px;width:21.3px;height:34.2px;"></div>
<div class="lg" style="left:556.2px;top:739.4px;width:21.3px;height:34.2px;"></div>
<div class="lg" style="left:616.2px;top:739.4px;width:21.3px;height:34.2px;"></div>
<div class="lg" style="left:676.3px;top:739.4px;width:21.3px;height:34.2px;"></div>
<div class="lg" style="left:856.6px;top:739.4px;width:21.3px;height:34.2px;"></div>
<div class="lg" style="left:916.6px;top:739.4px;width:21.3px;height:34.2px;"></div>
<div class="lg" style="left:976.7px;top:739.4px;width:21.3px;height:34.2px;"></div>
<div class="lg" style="left:1036.8px;top:739.4px;width:21.3px;height:34.2px;"></div>
<div class="lg" style="left:1096.9px;top:739.4px;width:21.3px;height:34.2px;"></div>
<div class="dg" style="left:440.9px;top:775.4px;width:21.5px;height:34.7px;"></div>
<div class="dg" style="left:501.0px;top:775.4px;width:21.5px;height:34.7px;"></div>
<div class="dg" style="left:561.1px;top:775.4px;width:21.5px;height:34.7px;"></div>
<div class="dg" style="left:621.1px;top:775.4px;width:21.5px;height:34.7px;"></div>
<div class="dg" style="left:681.2px;top:775.4px;width:21.5px;height:34.7px;"></div>
<div class="dg" style="left:861.5px;top:775.4px;width:21.5px;height:34.7px;"></div>
<div class="dg" style="left:921.5px;top:775.4px;width:21.5px;height:34.7px;"></div>
<div class="dg" style="left:981.6px;top:775.4px;width:21.5px;height:34.7px;"></div>
<div class="dg" style="left:1041.7px;top:775.4px;width:21.5px;height:34.7px;"></div>
<div class="dg" style="left:1101.8px;top:775.4px;width:21.5px;height:34.7px;"></div>
<div class="lg" style="left:436.0px;top:812.2px;width:21.3px;height:34.2px;"></div>
<div class="lg" style="left:496.1px;top:812.2px;width:21.3px;height:34.2px;"></div>
<div class="lg" style="left:556.2px;top:812.2px;width:21.3px;height:34.2px;"></div>
<div class="lg" style="left:616.2px;top:812.2px;width:21.3px;height:34.2px;"></div>
<div class="lg" style="left:676.3px;top:812.2px;width:21.3px;height:34.2px;"></div>
<div class="lg" style="left:856.6px;top:812.2px;width:21.3px;height:34.2px;"></div>
<div class="lg" style="left:916.6px;top:812.2px;width:21.3px;height:34.2px;"></div>
<div class="lg" style="left:976.7px;top:812.2px;width:21.3px;height:34.2px;"></div>
<div class="lg" style="left:1036.8px;top:812.2px;width:21.3px;height:34.2px;"></div>
<div class="lg" style="left:1096.9px;top:812.2px;width:21.3px;height:34.2px;"></div>
<div class="dg" style="left:440.9px;top:848.2px;width:21.5px;height:34.7px;"></div>
<div class="dg" style="left:501.0px;top:848.2px;width:21.5px;height:34.7px;"></div>
<div class="dg" style="left:561.1px;top:848.2px;width:21.5px;height:34.7px;"></div>
<div class="dg" style="left:621.1px;top:848.2px;width:21.5px;height:34.7px;"></div>
<div class="dg" style="left:681.2px;top:848.2px;width:21.5px;height:34.7px;"></div>
<div class="dg" style="left:861.5px;top:848.2px;width:21.5px;height:34.7px;"></div>
<div class="dg" style="left:921.5px;top:848.2px;width:21.5px;height:34.7px;"></div>
<div class="dg" style="left:981.6px;top:848.2px;width:21.5px;height:34.7px;"></div>
<div class="dg" style="left:1041.7px;top:848.2px;width:21.5px;height:34.7px;"></div>
<div class="dg" style="left:1101.8px;top:848.2px;width:21.5px;height:34.7px;"></div>
<div style="left:416.4px;top:600.7px;width:59.7px;height:20.5px;background:#c292fa;border-radius:2px;"></div>
<span class="t" style="left:429.9px;top:602.0px;font-size:9.2px;color:#5d3f8f;letter-spacing:-0.05px;">Training</span>
<div style="left:836.6px;top:491.6px;width:325.4px;height:20.2px;background:#6cb5f2;border-radius:2px 0 0 2px;"></div>
<span class="t" style="left:1001.6px;top:493.0px;font-size:9.2px;color:#3f5f86;letter-spacing:-0.04px;">Holiday</span>
<div class="hdr" style="left:0.0px;top:408.0px;width:363.7px;height:39.0px;z-index:2;"></div>
<div style="left:0;top:0;width:364px;height:450px;z-index:3;">
<div style="left:135.5px;top:408.0px;width:1.0px;height:39.0px;background:#dcdcdc;"></div>
<div style="left:216.1px;top:408.0px;width:1.0px;height:39.0px;background:#dcdcdc;"></div>
<span class="t b" style="left:7.5px;top:419.6px;font-size:11.6px;color:#333;letter-spacing:0.01px;">Resource</span>
<span class="t b" style="left:143.7px;top:419.6px;font-size:11.6px;color:#333;letter-spacing:0.26px;">Reso...</span>
<span class="t b" style="left:224.3px;top:419.6px;font-size:11.6px;color:#333;letter-spacing:0.15px;">Type</span>
<svg class="i" style="left:116.4px;top:418.6px;" width="9" height="18" viewBox="0 0 9 18"><path d="M4.5 1.5L8.3 5.7H0.7Z M4.5 16.5L8.3 12.3H0.7Z" fill="#adadad" stroke="none"/></svg>
<svg class="i" style="left:196.3px;top:418.6px;" width="9" height="18" viewBox="0 0 9 18"><path d="M4.5 1.5L8.3 5.7H0.7Z M4.5 16.5L8.3 12.3H0.7Z" fill="#adadad" stroke="none"/></svg>
</div>
<div style="left:349.5px;top:447.0px;width:14.2px;height:432.5px;background:#ebebeb;"></div>
<div style="left:349.5px;top:514.5px;width:14.2px;height:206.2px;background:#cbcbcb;"></div>
<div style="left:0.0px;top:879.5px;width:350.0px;height:13.5px;background:#ebebeb;"></div>
<div style="left:0.0px;top:879.5px;width:306.8px;height:13.5px;background:#cbcbcb;"></div>
<div class="hdr" style="left:366.0px;top:408.0px;width:810.0px;height:39.6px;z-index:2;"></div>
<div style="left:0;top:0;width:1176px;height:450px;z-index:3;overflow:hidden;">
<span class="t" style="left:370.2px;top:429.1px;font-size:11.6px;color:#555;letter-spacing:-0.29px;">10 Sun</span>
<div style="left:415.9px;top:427.5px;width:1.0px;height:20.1px;background:#dcdcdc;"></div>
<span class="t" style="left:421.3px;top:429.1px;font-size:11.6px;color:#555;letter-spacing:-0.10px;">11 Mon</span>
<div style="left:476.0px;top:427.5px;width:1.0px;height:20.1px;background:#dcdcdc;"></div>
<span class="t" style="left:481.4px;top:429.1px;font-size:11.6px;color:#555;letter-spacing:-0.29px;">12 Tue</span>
<div style="left:536.0px;top:427.5px;width:1.0px;height:20.1px;background:#dcdcdc;"></div>
<span class="t" style="left:541.4px;top:429.1px;font-size:11.6px;color:#555;transform:scaleX(0.941);transform-origin:0 50%;">13 Wed</span>
<div style="left:596.1px;top:427.5px;width:1.0px;height:20.1px;background:#dcdcdc;"></div>
<span class="t" style="left:601.5px;top:429.1px;font-size:11.6px;color:#555;letter-spacing:-0.18px;">14 Thu</span>
<div style="left:656.2px;top:427.5px;width:1.0px;height:20.1px;background:#dcdcdc;"></div>
<span class="t" style="left:661.6px;top:429.1px;font-size:11.6px;color:#555;transform:scaleX(0.941);transform-origin:0 50%;">15 Fri</span>
<div style="left:716.3px;top:427.5px;width:1.0px;height:20.1px;background:#dcdcdc;"></div>
<span class="t" style="left:721.7px;top:429.1px;font-size:11.6px;color:#555;letter-spacing:-0.25px;">16 Sat</span>
<div style="left:776.4px;top:408.0px;width:1.0px;height:39.6px;background:#dcdcdc;"></div>
<span class="t" style="left:781.8px;top:429.1px;font-size:11.6px;color:#555;transform:scaleX(0.955);transform-origin:0 50%;">17 Sun</span>
<div style="left:836.4px;top:427.5px;width:1.0px;height:20.1px;background:#dcdcdc;"></div>
<span class="t" style="left:841.8px;top:429.1px;font-size:11.6px;color:#555;letter-spacing:-0.19px;">18 Mon</span>
<div style="left:896.5px;top:427.5px;width:1.0px;height:20.1px;background:#dcdcdc;"></div>
<span class="t" style="left:901.9px;top:429.1px;font-size:11.6px;color:#555;letter-spacing:-0.29px;">19 Tue</span>
<div style="left:956.6px;top:427.5px;width:1.0px;height:20.1px;background:#dcdcdc;"></div>
<span class="t" style="left:962.0px;top:429.1px;font-size:11.6px;color:#555;transform:scaleX(0.948);transform-origin:0 50%;">20 Wed</span>
<div style="left:1016.7px;top:427.5px;width:1.0px;height:20.1px;background:#dcdcdc;"></div>
<span class="t" style="left:1022.1px;top:429.1px;font-size:11.6px;color:#555;letter-spacing:-0.16px;">21 Thu</span>
<div style="left:1076.8px;top:427.5px;width:1.0px;height:20.1px;background:#dcdcdc;"></div>
<span class="t" style="left:1082.2px;top:429.1px;font-size:11.6px;color:#555;transform:scaleX(0.948);transform-origin:0 50%;">22 Fri</span>
<div style="left:1136.8px;top:427.5px;width:1.0px;height:20.1px;background:#dcdcdc;"></div>
<span class="t" style="left:1142.2px;top:429.1px;font-size:11.6px;color:#555;letter-spacing:-0.25px;">23 Sat</span>
<span class="t" style="left:370.2px;top:410.2px;font-size:11.6px;color:#555;letter-spacing:-0.03px;">October 10, 2021</span>
<span class="t" style="left:781.3px;top:410.2px;font-size:11.6px;color:#555;letter-spacing:-0.03px;">October 17, 2021</span>
</div>
<div style="left:1162.0px;top:447.6px;width:14.0px;height:431.9px;background:#ebebeb;"></div>
<div style="left:1162.0px;top:515.2px;width:14.0px;height:205.8px;background:#cbcbcb;"></div>
<div style="left:366.9px;top:880.0px;width:795.1px;height:13.0px;background:#ebebeb;"></div>
<div style="left:447.5px;top:880.0px;width:338.9px;height:13.0px;background:#cbcbcb;"></div>
<div style="left:1176.0px;top:76.0px;width:15.0px;height:817.0px;background:#cbcbcb;"></div>
<div style="left:1191.0px;top:76.0px;width:31.0px;height:817.0px;background:#ebebeb;"></div>
<div style="left:1191.0px;top:111.8px;width:31.0px;height:36.0px;background:#cbcbcb;"></div>
<div style="left:1191.0px;top:111.8px;width:3.0px;height:36.0px;background:#1b8fc3;"></div>
<svg class="i" style="left:1202.0px;top:87.6px;stroke-width:1.3;" width="9" height="12" viewBox="0 0 9 12"><path d="M1.6 0.9l5.2 5.1-5.2 5.1"/></svg>
<svg class="i" style="left:1200.0px;top:122.0px;" width="13" height="15" viewBox="0 0 13 15"><rect x="1.2" y="2.6" width="10.6" height="11.4" rx="1"/><path d="M4.2 2.6V1.2h4.6v1.4M4 8.4l1.8 1.8 3.2-3.4"/></svg>
<svg class="i" style="left:1199.0px;top:158.6px;" width="16" height="16" viewBox="0 0 16 16"><circle cx="7.6" cy="7.6" r="6.6"/><path d="M7.6 3.8v4.6"/><circle cx="7.6" cy="10.9" r=".6" fill="#666" stroke="none"/></svg>
<div style="left:1222.0px;top:76.0px;width:366.0px;height:41.0px;background:#f5f5f5;"></div>
<span class="t b" style="left:1237.6px;top:88.2px;font-size:14.2px;color:#333;letter-spacing:-0.06px;">Rota Selector</span>
<div class="btn" style="left:1541.6px;top:82.6px;width:30.6px;height:27.2px;"></div>
<svg class="i" style="left:1548.5px;top:88.3px;stroke-width:1.1;" width="17" height="16" viewBox="0 0 17 16"><path d="M1 5.4V1h4.4M3.6 6V3.6H6M11.6 1H16v4.4M11 3.6h2.4V6M1 10.6V15h4.4M3.6 10v2.4H6M16 10.6V15h-4.4M13.4 10v2.4H11"/></svg>
<div style="left:1230.0px;top:123.9px;width:350.4px;height:30.7px;background:#f5f5f5;"></div>
<div style="left:1230.0px;top:123.9px;width:94.0px;height:30.7px;background:#fff;"></div>
<div style="left:1230.0px;top:123.9px;width:94.0px;height:2.7px;background:#1b8fc3;"></div>
<div style="left:1324.0px;top:123.9px;width:116.6px;height:30.7px;background:#e8e8e8;"></div>
<div style="left:1324.0px;top:123.9px;width:116.6px;height:2.7px;background:#cdcdcd;"></div>
<span class="t b" style="left:1244.7px;top:133.4px;font-size:11.6px;color:#333;letter-spacing:0.14px;">Rota Details</span>
<span class="t" style="left:1339.0px;top:133.4px;font-size:11.6px;color:#555;letter-spacing:0.13px;">Provisional Rota</span>
<span class="t" style="left:1244.7px;top:169.2px;font-size:11.6px;color:#5e5e5e;letter-spacing:0.13px;">Editing Rota: Rota_002 - includes oncall/manualDate range:</span>
<span class="t" style="left:1244.7px;top:186.3px;font-size:11.6px;color:#5e5e5e;letter-spacing:0.10px;">10/7/2021 - 11/7/2021</span>
<div style="left:1244.0px;top:218.2px;width:322.6px;height:1.0px;border-top:1px dashed #d0d0d0;height:0;"></div>
<div class="hdr" style="left:1244.0px;top:233.4px;width:321.3px;height:37.3px;"></div>
<div style="left:1534.1px;top:233.4px;width:1.0px;height:37.3px;background:#dcdcdc;"></div>
<span class="t b" style="left:1251.7px;top:244.2px;font-size:11.6px;color:#333;transform:scaleX(1.062);transform-origin:0 50%;">Division</span>
<div class="btn" style="left:1248.5px;top:276.0px;width:29.5px;height:24.0px;box-shadow:none;"></div>
<svg class="i" style="left:1257.0px;top:282.6px;stroke-width:1.3;" width="13" height="9" viewBox="0 0 13 9"><path d="M1 1.4l5.4 5.2 5.4-5.2"/></svg>
<span class="t" style="left:1286.2px;top:279.6px;font-size:11.6px;color:#5e5e5e;letter-spacing:-0.20px;">Rota</span>
<div class="sep" style="left:1244.0px;top:306.5px;width:322.0px;height:1.0px;"></div>
<div style="left:1272.1px;top:321.3px;width:9.8px;height:9.8px;box-sizing:border-box;border:1.75px solid #686868;border-radius:50%;"></div>
<span class="t" style="left:1299.0px;top:317.2px;font-size:11.6px;color:#5e5e5e;letter-spacing:-0.20px;">Region 0</span>
<div style="left:1272.1px;top:357.7px;width:9.8px;height:9.8px;box-sizing:border-box;border:1.75px solid #686868;border-radius:50%;"></div>
<span class="t" style="left:1299.0px;top:353.6px;font-size:11.6px;color:#5e5e5e;letter-spacing:-0.27px;">Region 1</span>
<div class="sep" style="left:1244.0px;top:342.5px;width:322.0px;height:1.0px;"></div>
<div class="sep" style="left:1244.0px;top:382.5px;width:322.0px;height:1.0px;"></div>
</div></body></html>
